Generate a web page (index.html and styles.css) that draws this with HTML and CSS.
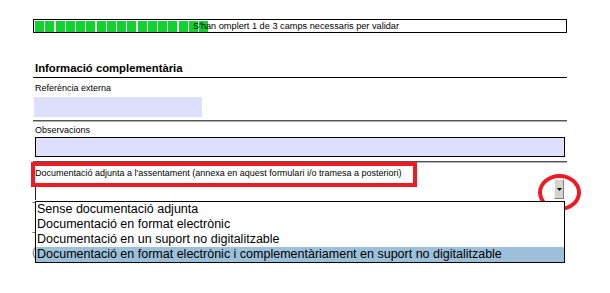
FILE: index.html
```html
<!DOCTYPE html>
<html lang="ca">

<head>
    <meta charset="UTF-8">
    <meta name="viewport" content="width=device-width, initial-scale=1.0">
    <title>Informació complementària</title>
    <link rel="stylesheet" href="styles.css">
</head>

<body>
    <div class="page">
        <!-- Barra de progrés de validació -->
        <div class="progress">
            <div class="progress-fill">
                <span></span><span></span><span></span><span></span><span></span><span></span>
                <span></span><span></span><span></span><span></span><span></span><span></span>
                <span></span><span></span><span></span><span></span><span></span>
            </div>
            <span class="progress-text">S'han omplert 1 de 3 camps necessaris per validar</span>
        </div>

        <h2 class="section-title">Informació complementària</h2>

        <div class="field-label">Referència externa</div>
        <div class="input input-short"></div>
        <div class="separator"></div>

        <div class="field-label label-obs">Observacions</div>
        <div class="input input-wide"></div>
        <div class="separator"></div>

        <div class="field-docs">
            <div class="field-label docs-label">Documentació adjunta a l'assentament (annexa en aquest formulari i/o tramesa a posteriori)</div>
            <div class="combo">
                <span class="combo-btn">
                    <svg width="5" height="3" viewBox="0 0 5 3"><path d="M0 0h5L2.5 3z" fill="#000"/></svg>
                </span>
            </div>
            <!-- camps de sota, tapats pel desplegable -->
            <div class="behind">
                <div>T</div>
                <div class="gap">T</div>
                <div>(</div>
            </div>

            <!-- anotacions en vermell -->
            <div class="mark-box"></div>
            <div class="mark-ring"></div>

            <ul class="dropdown">
                <li>Sense documentació adjunta</li>
                <li>Documentació en format electrònic</li>
                <li>Documentació en un suport no digitalitzable</li>
                <li class="selected">Documentació en format electrònic i complementàriament en suport no digitalitzable</li>
            </ul>
        </div>
    </div>
</body>

</html>
```

FILE: styles.css
```css
body {
    margin: 0;
    background-color: #fff;
    font-family: "Liberation Sans", Arial, sans-serif;
    color: #000;
}

.page {
    width: 534px;
    padding: 19px 0 0 33px;
}

/* barra de progrés */
.progress {
    position: relative;
    height: 14px;
    border: 1px solid #000;
    box-sizing: border-box;
}

.progress-fill {
    display: flex;
    gap: 1.25px;
    padding: 1px 0 0 1px;
    height: 11px;
}

.progress-fill span {
    width: 9px;
    height: 11px;
    background-color: #11d22f;
}

.progress-text {
    position: absolute;
    left: 159px;
    top: 0;
    font-size: 9.2px;
    line-height: 12px;
}

.section-title {
    margin: 29px 0 0;
    padding: 0 0 2px 2px;
    font-size: 11.3px;
    line-height: 13px;
    font-weight: bold;
    border-bottom: 1px solid #000;
}

.field-label {
    margin-top: 5px;
    padding-left: 2px;
    font-size: 9px;
    line-height: 11px;
}

.label-obs {
    margin-top: 3px;
}

.input {
    margin-top: 3px;
    height: 20px;
    background-color: #dedffc;
    box-sizing: border-box;
}

.input-short {
    width: 168px;
    margin-left: 1px;
}

.input-wide {
    width: 530px;
    margin-left: 2px;
    margin-top: 1px;
    border: 1px solid #000;
}

.separator {
    margin-top: 3px;
    height: 1px;
    border-bottom: 1px solid #b0b0b0;
    background-color: #555;
}

.input-wide + .separator {
    margin-top: 4px;
}

/* camp desplegable */
.field-docs {
    position: relative;
    height: 105px;
    padding-top: 5px;
    box-sizing: border-box;
}

.docs-label {
    margin-top: 0;
}

.combo {
    display: flex;
    justify-content: flex-end;
    width: 530px;
    height: 13px;
    margin: 8px 0 0 2px;
    border-left: 1px solid #1c1c3c;
    box-sizing: border-box;
}

.combo-btn {
    display: flex;
    align-items: center;
    justify-content: center;
    width: 10px;
    height: 20px;
    margin: -8px 1px 0 0;
    background-color: #d6d3ce;
    border-top: 1px solid #f4f4f4;
    border-left: 1px solid #f4f4f4;
    border-right: 1px solid #808080;
    border-bottom: 1px solid #808080;
    box-sizing: border-box;
}

.behind {
    margin-left: -1px;
    color: #777;
    font-size: 12.5px;
    line-height: 15px;
}

.behind .gap {
    margin-top: 15px;
}

.mark-box {
    position: absolute;
    left: -2px;
    top: -1px;
    width: 386px;
    height: 25px;
    border: 4px solid #ed1c24;
    box-sizing: border-box;
}

.mark-ring {
    position: absolute;
    left: 505px;
    top: 11px;
    width: 43px;
    height: 37px;
    border: 4px solid #ed1c24;
    border-radius: 50%;
    box-sizing: border-box;
}

.dropdown {
    position: absolute;
    left: 2px;
    top: 38px;
    width: 530px;
    margin: 0;
    padding: 0;
    list-style: none;
    background-color: #fff;
    border: 1px solid #000;
    box-sizing: border-box;
    font-size: 12.5px;
    line-height: 15px;
}

.dropdown li {
    padding-left: 1px;
    white-space: nowrap;
}

.dropdown .selected {
    background-color: #9cc0da;
}
```
